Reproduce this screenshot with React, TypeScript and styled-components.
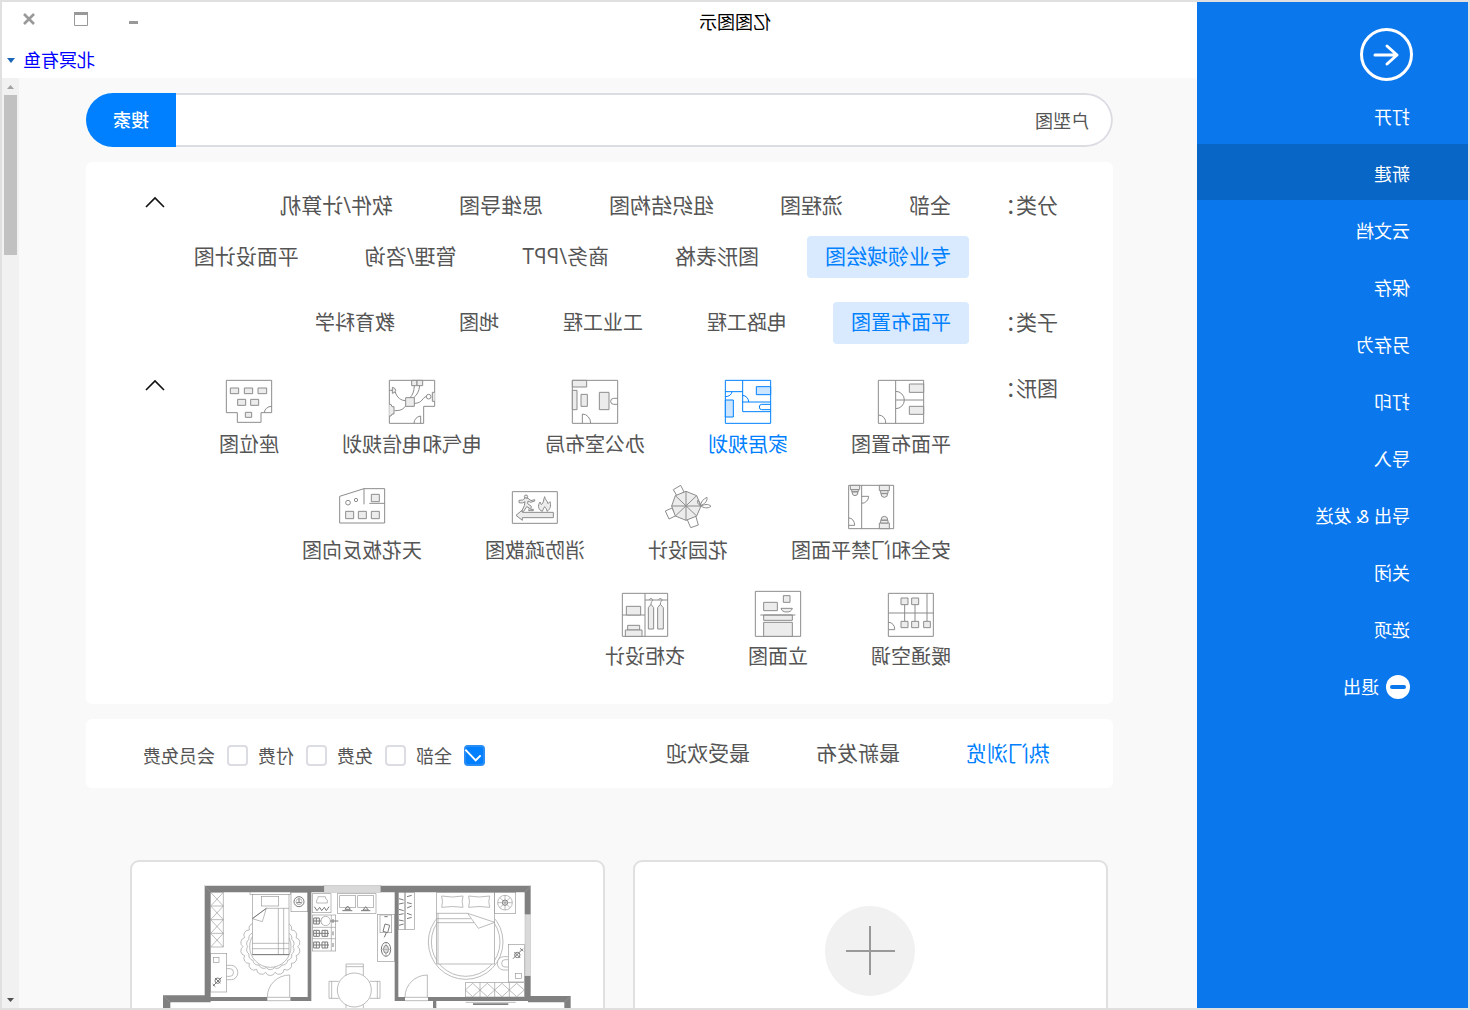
import React from "react";
import styled, { createGlobalStyle, css } from "styled-components";

const GlobalStyle = createGlobalStyle`
  * { box-sizing: border-box; }
  body { margin: 0; background: #fff; }
  button, input { font: inherit; }
`;

const BLUE = "#0080ff";
const TEXT = "#555555";

const Window = styled.div`
  display: flex;
  height: 100vh;
  border: 2px solid #e0e0e0;
  background: #f9f9f9;
  color: ${TEXT};
  font-family: "Open Sans", "Noto Sans CJK SC", sans-serif;
  font-size: 18px;
  line-height: 26px;
  overflow: hidden;
  transform: scaleX(-1);
`;

/* ---------- sidebar ---------- */

const Sidebar = styled.nav`
  flex: 0 0 271px;
  display: flex;
  flex-direction: column;
  padding-top: 26px;
  background: #0a77ed;
`;

const BackButton = styled.button`
  width: 53px;
  height: 53px;
  margin: 0 0 6px 55px;
  padding: 0;
  border: 0;
  background: none;
`;

const MenuItem = styled.button<{ $active?: boolean }>`
  display: flex;
  align-items: center;
  gap: 7px;
  height: 56px;
  margin: 0 0 1px;
  padding: 4px 0 0 58px;
  border: 0;
  background: ${(p) => (p.$active ? "#0866c6" : "transparent")};
  color: #fff;
  text-align: left;
`;

/* ---------- header ---------- */

const Main = styled.div`
  flex: 1;
  min-width: 0;
  display: flex;
  flex-direction: column;
`;

const Header = styled.header`
  display: grid;
  grid-template-columns: 1fr 271px;
  grid-template-rows: 40px 36px;
  background: #fff;
`;

const Title = styled.h1`
  margin: 0;
  align-self: center;
  color: #000;
  font-size: 18px;
  font-weight: 400;
  text-align: center;
`;

const Controls = styled.div`
  display: flex;
  justify-content: flex-end;
  padding-right: 1px;
`;

const ControlButton = styled.button`
  width: 52px;
  height: 33px;
  display: grid;
  place-items: center;
  padding: 0;
  border: 0;
  background: none;
`;

const Account = styled.div`
  grid-column: 2;
  display: flex;
  align-items: center;
  justify-content: flex-end;
  gap: 8px;
  padding-right: 5px;
`;

const AccountLink = styled.a`
  color: #0000ff;
  text-decoration: none;
`;

/* ---------- scrolling body ---------- */

const Body = styled.div`
  flex: 1;
  min-height: 0;
  display: flex;
`;

const Scroller = styled.main`
  flex: 1;
  min-width: 0;
  overflow: auto;
  scrollbar-width: none;
  padding: 15px 67px 0 84px;
`;

const ScrollTrack = styled.div`
  flex: 0 0 17px;
  display: flex;
  flex-direction: column;
  align-items: center;
  justify-content: space-between;
  background: #f1f1f1;
`;

const ScrollArrow = styled.svg`
  display: block;
  width: 17px;
  height: 17px;
`;

const ScrollThumb = styled.div`
  width: 13px;
  height: 160px;
  margin-bottom: auto;
  background: #c1c1c1;
`;

const SearchBar = styled.form`
  display: flex;
  height: 54px;
  margin-bottom: 15px;
  border-radius: 27px;
  overflow: hidden;
`;

const SearchInput = styled.input`
  flex: 1;
  min-width: 0;
  padding: 2px 22px 0;
  border: 2px solid #dcdce3;
  border-right: 0;
  border-radius: 27px 0 0 27px;
  background: #fff;
  color: ${TEXT};
  outline: none;
`;

const SearchButton = styled.button`
  width: 90px;
  padding: 0;
  border: 0;
  background: ${BLUE};
  color: #fff;
  font-weight: 500;
`;

const panel = css`
  margin-bottom: 15px;
  border-radius: 6px;
  background: #fff;
`;

const FilterPanel = styled.section`
  ${panel}
  display: flex;
  flex-direction: column;
  gap: 24px;
  padding: 23px 59px 34px 55px;
`;

const FilterRow = styled.div`
  display: grid;
  grid-template-columns: 89px 1fr 20px;
  align-items: start;
`;

const FilterLabel = styled.div`
  font-size: 21px;
  line-height: 40px;
`;

const Option = styled.button<{ $active?: boolean }>`
  height: 42px;
  padding: 0 18px;
  border: 0;
  border-radius: 4px;
  background: ${(p) => (p.$active ? "#d9eaff" : "transparent")};
  color: ${(p) => (p.$active ? BLUE : TEXT)};
`;

const Options = styled.div<{ $small?: boolean }>`
  display: flex;
  flex-wrap: wrap;
  gap: 9px ${(p) => (p.$small ? 28 : 30)}px;
  font-size: ${(p) => (p.$small ? 20 : 21)}px;

  ${Option} {
    padding-bottom: ${(p) => (p.$small ? 0 : 2)}px;
  }
`;

const Figures = styled.div`
  display: flex;
  flex-wrap: wrap;
  gap: 26px 27px;
  padding-top: 10px;
`;

const Figure = styled.button<{ $active?: boolean }>`
  display: flex;
  flex-direction: column;
  align-items: center;
  gap: 6px;
  padding: 0 18px;
  border: 0;
  background: none;
  color: ${(p) => (p.$active ? BLUE : TEXT)};
  font-size: 20px;
`;

const FigureSvg = styled.svg<{ $active?: boolean }>`
  display: block;
  width: 48px;
  height: 48px;
  fill: none;
  stroke: ${(p) => (p.$active ? BLUE : "#8c8c8c")};
  stroke-width: 3;
  stroke-linejoin: round;
  transform: scaleX(-1);

  .f {
    fill: ${(p) => (p.$active ? "#cce5ff" : "#ececec")};
  }
`;

const CollapseButton = styled.button`
  display: grid;
  place-items: center;
  width: 20px;
  height: 34px;
  padding: 0;
  border: 0;
  background: none;
`;

const SortPanel = styled.section`
  ${panel}
  display: flex;
  align-items: center;
  justify-content: space-between;
  height: 69px;
  padding: 0 57px 0 63px;
`;

const Tabs = styled.div`
  display: flex;
  gap: 66px;
  padding-bottom: 2px;
`;

const Tab = styled.button<{ $active?: boolean }>`
  padding: 0;
  border: 0;
  background: none;
  color: ${(p) => (p.$active ? BLUE : TEXT)};
  font-size: 21px;
`;

const Checks = styled.div`
  display: flex;
  gap: 10px;
  padding-top: 4px;
`;

const CheckLabel = styled.label`
  display: grid;
  grid-template-columns: 21px auto;
  align-items: center;
  column-gap: 12px;
`;

const CheckInput = styled.input`
  grid-area: 1 / 1;
  appearance: none;
  width: 21px;
  height: 21px;
  margin: 0;
  border: 2px solid #dcdce3;
  border-radius: 4px;
  background: #fff;

  &:checked {
    border-color: #2a8cf5;
    background: ${BLUE};
  }
  &:not(:checked) + svg {
    display: none;
  }
`;

const CheckMark = styled.svg`
  grid-area: 1 / 1;
  width: 21px;
  height: 21px;
  pointer-events: none;
`;

const Cards = styled.div`
  display: grid;
  grid-template-columns: 1fr 1fr;
  gap: 28px;
  padding: 57px 44px 28px 5px;
`;

const Card = styled.button`
  display: flex;
  justify-content: center;
  align-items: flex-start;
  height: 332px;
  padding: 22px 0 0;
  border: 2px solid #e0e0e0;
  border-radius: 9px;
  background: #fff;
  overflow: hidden;
`;

const AddCircle = styled.span`
  display: grid;
  place-items: center;
  width: 90px;
  height: 90px;
  margin-top: 22px;
  border-radius: 50%;
  background: #f1f1f1;
`;

const PlanSvg = styled.svg`
  display: block;
  width: 408px;
  height: 300px;
  fill: none;
  stroke: #9a9a9a;
  stroke-width: 2;
  transform: scaleX(-1);

  .wall {
    fill: #808080;
    stroke: none;
  }
  .glass {
    fill: #d9d9d9;
    stroke: #c4c4c4;
  }
  .w {
    fill: #fff;
  }
  .d {
    stroke: #7a7a7a;
    stroke-width: 3;
  }
`;

/* ---------- drawings ---------- */

type RectProps = { b: [number, number, number, number]; c?: string };
const Box = ({ b, c }: RectProps) => (
  <rect className={c} x={b[0]} y={b[1]} width={b[2] - b[0]} height={b[3] - b[1]} />
);

type FigureItem = { name: string; view: string; active?: boolean; art: React.ReactNode };

const figures: FigureItem[] = [
  {
    name: "平面布置图",
    view: "594 54 144 144",
    art: (
      <>
        <Box b={[598, 61, 734, 190]} />
        <Box c="f" b={[691, 72, 734, 97]} />
        <Box c="f" b={[691, 139, 734, 163]} />
        <path d="M650 61V190M650 120H734M650 94a26 26 0 0 1 0 52M598 165a22 22 0 0 1 22 25" />
      </>
    ),
  },
  {
    name: "家居规划",
    view: "132 54 144 144",
    active: true,
    art: (
      <>
        <Box b={[136, 61, 272, 190]} />
        <Box c="f" b={[229, 80, 272, 104]} />
        <Box c="f" b={[136, 120, 160, 171]} />
        <path d="M188 61V155H272M188 126H272M136 95H188M272 133H245q-7 0-7 8t7 8H272M188 106a20 20 0 0 1 18 20M156 95a20 16 0 0 1-20 15" />
      </>
    ),
  },
  {
    name: "办公室布局",
    view: "1113 54 144 144",
    art: (
      <>
        <Box b={[1117, 61, 1253, 190]} />
        <Box c="f" b={[1117, 61, 1160, 81]} />
        <Box c="f" b={[1117, 91, 1131, 149]} />
        <Box c="f" b={[1143, 103, 1162, 139]} />
        <Box c="f" b={[1198, 97, 1227, 149]} />
        <path d="M1253 115h-12a9 9 0 0 0 0 18h12M1147 190V162a25 28 0 0 1 25 28" />
      </>
    ),
  },
  {
    name: "电气和电信规划",
    view: "564 54 144 144",
    art: (
      <>
        <path d="M568 61H704V139H671V190H568z" />
        <Box c="f" b={[635, 61, 651, 77]} />
        <Box c="f" b={[651, 61, 668, 77]} />
        <Box c="f" b={[617, 113, 643, 139]} />
        <path className="f" d="M704 97H697V124H704M568 133h5l3 7h6v22h-6l-3 6h-5M577 82q10 2 10 9t-10 9z" />
        <path d="M643 77C642 95 638 105 630 113M659 77c-2 18-8 28-18 36M643 130c26 0 24-20 36-20M568 91h9M586 96c4 17 18 26 31 26M584 152c22 0 26-6 33-14M662 190V168a22 22 0 0 0-20 22" />
        <circle cx="686" cy="110" r="7" />
      </>
    ),
  },
  {
    name: "座位图",
    view: "72 54 144 144",
    art: (
      <>
        <path d="M76 61H212V158H180V187H109V158H76zM190 158a22 20 0 0 1 22-19" />
        <Box c="f" b={[88, 84, 113, 101]} />
        <Box c="f" b={[130, 84, 155, 101]} />
        <Box c="f" b={[171, 84, 197, 101]} />
        <Box c="f" b={[110, 118, 134, 136]} />
        <Box c="f" b={[149, 118, 173, 136]} />
        <Box c="f" b={[133, 157, 152, 172]} />
      </>
    ),
  },
  {
    name: "安全和门禁平面图",
    view: "507 372 144 144",
    art: (
      <>
        <Box b={[512, 376, 647, 506]} />
        <path d="M551 376V506M551 409h21a21 22 0 0 1-21 21M512 474a17 22 0 0 1 18 22H512" />
        <Box c="f" b={[517, 376, 545, 389]} />
        <Box c="f" b={[604, 376, 634, 392]} />
        <Box c="f" b={[604, 489, 634, 506]} />
        <path className="f" d="M521 389h20v6h-20zM608 392h22v8h-22zM608 481h22v8h-22z" />
        <path className="f" d="M522 396a9 11 0 0 0 18 0zM609 401a10 11 0 0 0 20 0zM609 480a10 11 0 0 1 20 0z" />
      </>
    ),
  },
  {
    name: "花园设计",
    view: "1127 42 144 144",
    art: (
      <>
        <path d="M1155 59L1177 46 1187 66 1166 78zM1131 123L1151 114 1163 137 1142 147zM1196 147L1222 137 1230 165 1207 173z" />
        <path className="f" d="M1193 64L1225 77 1238 108 1225 138 1193 151 1161 138 1150 108 1161 77z" />
        <path d="M1193 64V151M1150 108H1238M1161 77L1225 138M1225 77L1161 138" />
        <path d="M1236 107c2-10 8-20 20-25c2 10-6 20-20 25zM1238 108c8-4 22-8 30 1c-10 8-24 4-30-1zM1234 106c-5-4-8-9-6-15c6 3 8 9 6 15z" />
      </>
    ),
  },
  {
    name: "消防疏散图",
    view: "666 42 144 144",
    art: (
      <>
        <Box b={[670, 65, 805, 160]} />
        <path className="f" d="M681 136L700 120V127H793V143H700V151z" />
        <path className="f" d="M767 80c0 7 9 14 10 21l6-6c4 13 0 24-9 29c0-6-4-10-7-14c-2 5-6 8-7 14c-12-4-15-17-7-28l4 8c8-5 6-16 10-24z" />
        <circle className="f" cx="711" cy="80" r="5" />
        <path className="f" d="M690 98l10 1 8-4-2 12-8 17h6l9-14 8 4-2 8h14v-4h-8l2-9-11-8 1-8 8 4 12-4v-4l-11 3-9-7-8-1-8 6-11 1z" />
      </>
    ),
  },
  {
    name: "天花板反向图",
    view: "147 42 144 144",
    art: (
      <>
        <path d="M152 79L225 56H287V159H152zM225 56V103M241 100H287" />
        <Box c="f" b={[247, 73, 271, 95]} />
        <Box c="f" b={[170, 124, 194, 146]} />
        <Box c="f" b={[208, 124, 232, 146]} />
        <Box c="f" b={[247, 124, 271, 146]} />
        <circle cx="177" cy="98" r="7" />
        <circle cx="201" cy="90" r="5" />
      </>
    ),
  },
  {
    name: "暖通空调",
    view: "894 45 144 144",
    art: (
      <>
        <Box b={[898, 55, 1033, 184]} />
        <path d="M898 114H1033M1014 55V139M947 89V139M978 89V139M898 142a18 20 0 0 1 19 22H898" />
        <Box c="f" b={[936, 69, 957, 89]} />
        <Box c="f" b={[968, 69, 989, 89]} />
        <Box c="f" b={[936, 139, 957, 158]} />
        <Box c="f" b={[968, 139, 989, 158]} />
        <Box c="f" b={[1004, 139, 1024, 158]} />
      </>
    ),
  },
  {
    name: "立面图",
    view: "492 45 144 144",
    art: (
      <>
        <Box b={[496, 49, 632, 184]} />
        <Box c="f" b={[580, 62, 600, 82]} />
        <Box c="f" b={[521, 82, 562, 107]} />
        <path className="f" d="M573 100h34c-2 8-8 11-17 11s-15-3-17-11z" />
        <Box c="f" b={[521, 120, 607, 136]} />
        <Box c="f" b={[521, 142, 607, 184]} />
        <path d="M511 120H616" />
      </>
    ),
  },
  {
    name: "衣柜设计",
    view: "87 45 144 144",
    art: (
      <>
        <Box b={[91, 55, 227, 184]} />
        <path d="M159 55V184M91 120H159M159 75H227" />
        <Box c="f" b={[103, 94, 146, 120]} />
        <Box c="f" b={[107, 151, 143, 165]} />
        <Box c="f" b={[100, 165, 150, 184]} />
        <path className="f" d="M169 162V98l8-10 8 10v64zM197 162V98l8-10 9 10v64z" />
        <path d="M172 75c0-6 10-6 10 0c0 3-5 4-5 13M200 75c0-6 10-6 10 0c0 3-5 4-5 13" />
      </>
    ),
  },
];

/* Scalloped rug edge round the single bed. */
const rug = (r: number) => {
  const n = 18;
  let d = "";
  for (let i = 0; i <= n; i++) {
    const a = (i / n) * Math.PI * 2;
    const x = Math.round(454 + Math.cos(a) * r);
    const y = Math.round(290 + Math.sin(a) * (r - 4));
    d += i ? `A15 15 0 0 1 ${x} ${y}` : `M${x} ${y}`;
  }
  return d;
};

const FloorPlan = () => (
  <PlanSvg viewBox="132 102 1224 900" aria-label="户型图" role="img">
    <path d={rug(82)} />
    <path d={rug(68)} />
    <ellipse cx="454" cy="290" rx="62" ry="62" />
    <Box c="w" b={[393, 123, 515, 133]} />
    <Box c="w" b={[400, 133, 510, 314]} />
    <Box b={[427, 139, 479, 168]} />
    <path d="M442 175H510M478 175V314M494 175V314M400 280H510M400 296H510" />
    <path className="w" d="M400 206L442 175 430 215z" />
    <path className="d" d="M400 314H510M400 206L442 175" />
    <Box b={[516, 127, 566, 185]} />
    <circle className="d" cx="540" cy="155" r="15" />
    <path className="d" d="M540 144V158M532 158H548" />
    <circle cx="540" cy="155" r="9" />
    <path d="M275 127H313V291H275M275 168H313M275 209H313M275 250H313M275 127L313 168M313 127L275 168M275 168L313 209M313 168L275 209M275 209L313 250M313 209L275 250M275 250L313 291M313 250L275 291" />
    <Box b={[275, 310, 323, 426]} />
    <Box b={[283, 322, 300, 337]} />
    <path d="M323 346h14a19 21 0 0 1 0 43h-14M323 356h10a10 11 0 0 1 0 23h-10" />
    <circle className="d" cx="296" cy="392" r="8" />
    <path className="d" d="M282 408L308 382M288 384L304 400M281 402l8 8" />

    <Box b={[580, 131, 636, 188]} />
    <path d="M593 159V150q4-2 4-10h22q0 8 6 10v9z" />
    <path className="d" d="M586 170l8 12 8-10 6 10 8-10 6 10 8-12" />
    <Box b={[580, 195, 650, 303]} />
    <path d="M637 195V303M580 232H650M580 266H650" />
    {[213, 250, 285].map((y) => (
      <path key={y} className="d" d={`M584 ${y - 9}h17v18h-17zM609 ${y - 9}h17v18h-17zM584 ${y}h46M592 ${y - 9}v18M618 ${y - 9}v18M642 ${y - 6}v12`} />
    ))}
    <circle className="w" cx="620" cy="213" r="14" />
    <path className="d" d="M634 213H658" />
    <Box b={[655, 131, 771, 190]} />
    <Box b={[662, 137, 710, 172]} />
    <Box b={[716, 137, 764, 172]} />
    <path className="d" d="M678 178l8-10 8 10zM732 180l8-10 8 10zM670 182H700M726 182H754" />
    <circle className="w" cx="706" cy="420" r="51" />
    <path d="M681 376V342H733V376M681 350H733M659 394H630V445H659M638 394V445M753 394H783V445H753M775 394V445M681 464V498H733V464" />

    <Box b={[775, 193, 827, 334]} />
    <Box b={[783, 195, 818, 248]} />
    <path className="d" d="M798 222l14 4-6 22-14-4zM796 262l6-14M796 200h10" />
    <ellipse className="d" cx="801" cy="298" rx="14" ry="21" />
    <ellipse className="d" cx="801" cy="298" rx="7" ry="12" />
    <path d="M787 298h28M801 277v42" />
    <Box b={[838, 127, 886, 238]} />
    <path className="d" d="M858 127V238M840 146l14 4M840 162l14-3M840 178l14 4M840 194l14-3M840 210l14 3M840 226l14-4M864 140l14-4M864 158l14 3M864 174l14-6M864 190l14 5M864 206l14-4" />
    <circle cx="1040" cy="276" r="112" />
    <circle cx="1040" cy="276" r="103" />
    <Box c="w" b={[953, 127, 1127, 342]} />
    <path d="M968 138q32 6 64 0q-5 17 0 34q-32-5-64 0q5-17 0-34zM1049 138q32 6 63 0q-5 17 0 34q-32-5-63 0q5-17 0-34zM953 190H1046M953 206H1055M953 218H1065M957 190V342" />
    <path className="w" d="M1046 190L1078 235 1127 217z" />
    <Box b={[1127, 127, 1190, 190]} />
    <circle cx="1158" cy="158" r="22" />
    <circle className="d" cx="1158" cy="158" r="8" />
    <path d="M1158 136V180M1136 158H1180M1143 143L1173 173M1173 143L1143 173" />
    <path className="w" d="M1168 320h-14a19 20 0 0 0 0 40h14M1168 329h-10a10 11 0 0 0 0 22h10" />
    <Box c="w" b={[1168, 283, 1216, 396]} />
    <Box b={[1189, 370, 1207, 385]} />
    <circle className="d" cx="1195" cy="315" r="8" />
    <path className="d" d="M1182 326L1212 296M1186 306L1204 324M1203 295l10 8" />
    <Box b={[1039, 398, 1216, 441]} />
    <path d="M1083 398V441M1127 398V441M1171 398V441M1061 400L1083 420 1061 440 1039 420zM1105 400L1127 420 1105 440 1083 420zM1149 400L1171 420 1149 440 1127 420zM1193 400L1216 420 1193 440 1171 420z" />

    <Box c="glass" b={[615, 106, 785, 127]} />
    <Box c="glass" b={[1218, 193, 1234, 378]} />
    <path
      className="wall"
      d="M257 107H615V127H577V453H514V441H566V127H275V441H445V453H275V457H154V1002H132V436H257z
         M785 107H1235V193H1217V127H838V441H858V453H827V127H785z
         M1217 378H1235V438H1355V1002H1336V457H1227V453H952V1002H942V453H927V441H1217z
         M1062 460H1168V465H1062z"
    />
    <path d="M1040 457H1190M257 107L275 127M132 436L154 457M1235 107L1217 127M1355 438L1336 457" />
    <path d="M445 441A67 66 0 0 1 512 375V441M858 441A67 66 0 0 1 925 375V441M445 442H514M445 452H514M858 442H927M858 452H927" />
  </PlanSvg>
);

const Chevron = () => (
  <svg width="20" height="12" viewBox="0 0 20 12" fill="none" stroke="#111" strokeWidth="1.6" aria-hidden="true">
    <path d="M1 11L10 2L19 11" />
  </svg>
);

/* ---------- data ---------- */

const menu = ["打开", "新建", "云文档", "保存", "另存为", "打印", "导入", "导出 & 发送", "关闭", "选项"];
const categories = ["全部", "流程图", "组织结构图", "思维导图", "软件/计算机", "专业领域绘图", "图形表格", "商务/PPT", "管理/咨询", "平面设计图"];
const subcategories = ["平面布置图", "电路工程", "工业工程", "地图", "教育科学"];
const sorts = ["热门浏览", "最新发布", "最受欢迎"];
const prices = ["全部", "免费", "付费", "会员免费"];

export default function App() {
  return (
    <>
      <GlobalStyle />
      <Window>
        <Sidebar>
          <BackButton aria-label="返回">
            <svg width="53" height="53" viewBox="0 0 53 53" fill="none" stroke="#fff" aria-hidden="true">
              <circle cx="26.5" cy="26.5" r="25" strokeWidth="3" />
              <path d="M38 27H16M26 18L16 27L26 36" strokeWidth="3" strokeLinecap="round" strokeLinejoin="round" />
            </svg>
          </BackButton>
          {menu.map((name) => (
            <MenuItem key={name} $active={name === "新建"}>
              {name}
            </MenuItem>
          ))}
          <MenuItem>
            <svg width="24" height="24" viewBox="0 0 24 24" aria-hidden="true">
              <circle cx="12" cy="12" r="12" fill="#fff" />
              <path d="M6 12H18" stroke="#0a77ed" strokeWidth="4" strokeLinecap="round" />
            </svg>
            退出
          </MenuItem>
        </Sidebar>

        <Main>
          <Header>
            <Title>亿图图示</Title>
            <Controls>
              <ControlButton aria-label="最小化">
                <svg width="14" height="14" viewBox="0 0 14 14" aria-hidden="true">
                  <rect x="2" y="9" width="9" height="3" fill="#999" />
                </svg>
              </ControlButton>
              <ControlButton aria-label="最大化">
                <svg width="14" height="14" viewBox="0 0 14 14" aria-hidden="true">
                  <path d="M0.5 1H13.5V13.5H0.5z" fill="none" stroke="#999" />
                  <rect width="14" height="3" fill="#999" />
                </svg>
              </ControlButton>
              <ControlButton aria-label="关闭窗口">
                <svg width="14" height="14" viewBox="0 0 14 14" stroke="#999" strokeWidth="2.6" aria-hidden="true">
                  <path d="M2 2L12 12M12 2L2 12" />
                </svg>
              </ControlButton>
            </Controls>
            <Account>
              <AccountLink href="#account">北冥有鱼</AccountLink>
              <svg width="8" height="5" viewBox="0 0 8 5" aria-hidden="true">
                <path d="M0 0H8L4 5z" fill="#1a66b8" />
              </svg>
            </Account>
          </Header>

          <Body>
            <Scroller>
              <SearchBar onSubmit={(e) => e.preventDefault()}>
                <SearchInput aria-label="搜索模板" defaultValue="户型图" />
                <SearchButton type="submit">搜索</SearchButton>
              </SearchBar>

              <FilterPanel>
                <FilterRow>
                  <FilterLabel>分类：</FilterLabel>
                  <Options>
                    {categories.map((name) => (
                      <Option key={name} $active={name === "专业领域绘图"}>
                        {name}
                      </Option>
                    ))}
                  </Options>
                  <CollapseButton aria-label="收起分类">
                    <Chevron />
                  </CollapseButton>
                </FilterRow>
                <FilterRow>
                  <FilterLabel>子类：</FilterLabel>
                  <Options $small>
                    {subcategories.map((name) => (
                      <Option key={name} $active={name === "平面布置图"}>
                        {name}
                      </Option>
                    ))}
                  </Options>
                </FilterRow>
                <FilterRow>
                  <FilterLabel>图形：</FilterLabel>
                  <Figures>
                    {figures.map((f) => (
                      <Figure key={f.name} $active={f.active}>
                        <FigureSvg viewBox={f.view} $active={f.active} aria-hidden="true">
                          {f.art}
                        </FigureSvg>
                        {f.name}
                      </Figure>
                    ))}
                  </Figures>
                  <CollapseButton aria-label="收起图形">
                    <Chevron />
                  </CollapseButton>
                </FilterRow>
              </FilterPanel>

              <SortPanel>
                <Tabs>
                  {sorts.map((name) => (
                    <Tab key={name} $active={name === "热门浏览"}>
                      {name}
                    </Tab>
                  ))}
                </Tabs>
                <Checks>
                  {prices.map((name) => (
                    <CheckLabel key={name}>
                      <CheckInput type="checkbox" defaultChecked={name === "全部"} />
                      <CheckMark viewBox="0 0 63 63" aria-hidden="true">
                        <path d="M59 14L28 46L13 31" fill="none" stroke="#fff" strokeWidth="6" />
                      </CheckMark>
                      {name}
                    </CheckLabel>
                  ))}
                </Checks>
              </SortPanel>

              <Cards>
                <Card aria-label="新建空白绘图">
                  <AddCircle>
                    <svg width="50" height="50" viewBox="0 0 50 50" stroke="#999" strokeWidth="2" aria-hidden="true">
                      <path d="M25 0V49M0 25H49" />
                    </svg>
                  </AddCircle>
                </Card>
                <Card>
                  <FloorPlan />
                </Card>
              </Cards>
            </Scroller>
            <ScrollTrack aria-hidden="true">
              <ScrollArrow viewBox="0 0 17 17">
                <path d="M5 11H12L8.5 7z" fill="#a3a3a3" />
              </ScrollArrow>
              <ScrollThumb />
              <ScrollArrow viewBox="0 0 17 17">
                <path d="M5 7H12L8.5 11z" fill="#505050" />
              </ScrollArrow>
            </ScrollTrack>
          </Body>
        </Main>
      </Window>
    </>
  );
}
